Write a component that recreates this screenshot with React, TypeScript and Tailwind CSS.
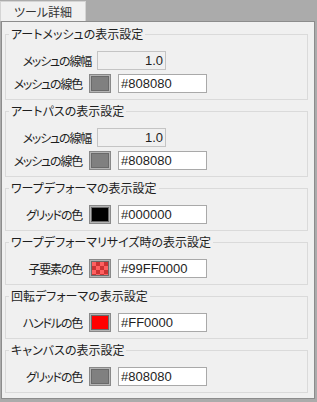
import React from "react";

type Row =
  | { kind: "width"; label: string; value: string }
  | { kind: "color"; label: string; value: string; swatch: string };

type Group = { title: string; rows: Row[] };

const groups: Group[] = [
  {
    title: "アートメッシュの表示設定",
    rows: [
      { kind: "width", label: "メッシュの線幅", value: "1.0" },
      { kind: "color", label: "メッシュの線色", value: "#808080", swatch: "gray" },
    ],
  },
  {
    title: "アートパスの表示設定",
    rows: [
      { kind: "width", label: "メッシュの線幅", value: "1.0" },
      { kind: "color", label: "メッシュの線色", value: "#808080", swatch: "gray" },
    ],
  },
  {
    title: "ワープデフォーマの表示設定",
    rows: [{ kind: "color", label: "グリッドの色", value: "#000000", swatch: "black" }],
  },
  {
    title: "ワープデフォーマリサイズ時の表示設定",
    rows: [{ kind: "color", label: "子要素の色", value: "#99FF0000", swatch: "alpha" }],
  },
  {
    title: "回転デフォーマの表示設定",
    rows: [{ kind: "color", label: "ハンドルの色", value: "#FF0000", swatch: "red" }],
  },
  {
    title: "キャンバスの表示設定",
    rows: [{ kind: "color", label: "グリッドの色", value: "#808080", swatch: "gray" }],
  },
];

function Swatch({ kind }: { kind: string }) {
  const fill =
    kind === "gray"
      ? "bg-[#808080]"
      : kind === "black"
        ? "bg-[#000000]"
        : kind === "red"
          ? "bg-[#ff0000]"
          : "bg-[conic-gradient(#cc3333_25%,#ff6060_0_50%,#cc3333_0_75%,#ff6060_0)] bg-[length:8px_8px]";
  return (
    <div className="h-[19px] w-[22px] shrink-0 border border-[#888888] bg-[#b4b4b4] p-[1px]">
      <div className={`h-full w-full border border-[#6a6a6a] ${fill}`} />
    </div>
  );
}

function FieldRow({ row }: { row: Row }) {
  if (row.kind === "width") {
    return (
      <div className="flex h-[19px] items-center">
        <div className="flex w-[91px] shrink-0 justify-end pr-[6px]">
          <span className="whitespace-nowrap tracking-[-1.2px]">{row.label}</span>
        </div>
        <div className="flex h-[19px] w-[69px] items-center justify-end border border-[#c4c4c4] bg-[#f0f0f0] pr-[2px] font-['Liberation_Sans',sans-serif] text-[13px] [font-feature-settings:normal]">
          {row.value}
        </div>
      </div>
    );
  }
  return (
    <div className="flex h-[19px] items-center">
      <div className="flex w-[83px] shrink-0 justify-end pr-[7px]">
        <span className="whitespace-nowrap tracking-[-1.2px]">{row.label}</span>
      </div>
      <Swatch kind={row.swatch} />
      <div className="ml-[7px] flex h-[19px] w-[89px] items-center border border-[#a9a9a9] bg-white pl-[2px] font-['Liberation_Sans',sans-serif] text-[13px] [font-feature-settings:normal]">
        {row.value}
      </div>
    </div>
  );
}

export default function App() {
  return (
    <div className="h-[402px] w-[317px] bg-[#ababab] font-['Noto_Sans_CJK_JP','Noto_Sans',sans-serif] text-[12px] text-[#1e1e1e] [font-feature-settings:'palt']">
      <div className="flex h-[21px] items-end">
        <div className="flex h-[20px] w-[86px] items-center justify-center border border-b-0 border-[#d4d4d4] bg-[#f0f0f0] text-[#333333]">
          ツール詳細
        </div>
      </div>
      <div className="ml-[1px] flex h-[378px] w-[314px] flex-col gap-[4px] border border-[#8c8c8c] bg-[#f0f0f0] pl-[3px] pt-[5px]">
        {groups.map((g) => (
          <fieldset key={g.title} className="w-[303px] border border-[#dadada] pb-[6px]">
            <legend className="ml-[3px] px-[2px] leading-[14px]">{g.title}</legend>
            <div className="mt-[10px] flex flex-col gap-[4px]">
              {g.rows.map((r, i) => (
                <FieldRow key={i} row={r} />
              ))}
            </div>
          </fieldset>
        ))}
      </div>
    </div>
  );
}
